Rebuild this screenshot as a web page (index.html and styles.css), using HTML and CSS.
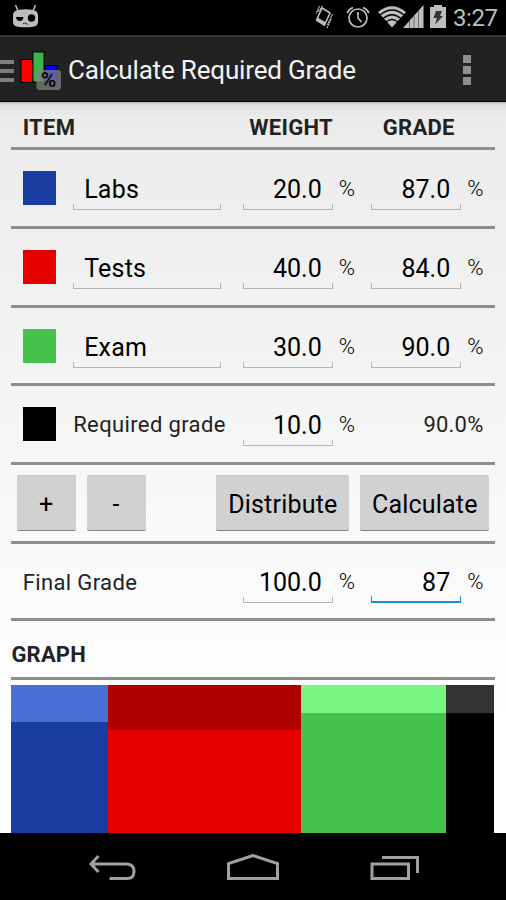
FILE: index.html
```html
<!DOCTYPE html>
<html lang="en">
<head>
    <meta charset="UTF-8">
    <meta name="viewport" content="width=device-width, initial-scale=1.0">
    <title>Calculate Required Grade</title>
    <link rel="stylesheet" href="styles.css">
</head>
<body>
    <div class="status-bar">
        <svg class="robot" width="26" height="24" viewBox="0 0 26 24">
            <path d="M2.500 0 L5 6 M22.500 0 L20 6" stroke="#bebebe" stroke-width="1.500"/>
            <path d="M5 5 Q13 3.500 20 5 Q25 6 25 10 V17 Q25 21 20 21.700 Q13 23 5 21.700 Q0 21 0 17 V10 Q0 6 5 5Z" fill="#bebebe"/>
            <path d="M3 12 H10.500 Q10 16 6.800 16 Q3.500 16 3 12Z" fill="#000"/>
            <circle cx="18.500" cy="13" r="3.700" fill="#000"/>
            <path d="M10 18.500 L12 18 L15 19.500" fill="none" stroke="#333"/>
        </svg>
        <div class="status-icons">
            <svg class="vibrate" width="20" height="24" viewBox="0 0 20 24" fill="none" stroke="#bebebe">
                <path d="M8 3 L16 8 L10.500 20 L2.500 15 Z" stroke-width="1.600" stroke-linejoin="round"/>
                <path d="M2 15.500 L10.500 21 L12 17.500 L3.500 12.500 Z" fill="#bebebe" stroke="none"/>
                <path d="M5.500 1 L2 9 M8.500 1 L4 7 M18.500 9 L13.500 20 M17 14 L13 23" stroke-width="1.200" stroke-dasharray="2 .6"/>
            </svg>
            <svg class="alarm" width="24" height="23" viewBox="0 0 24 23" fill="none" stroke="#bebebe">
                <circle cx="12" cy="12" r="9" stroke-width="1.700"/>
                <path d="M12 6 V12 L15.500 16" stroke-width="1.700"/>
                <path d="M1 7 Q3 3 7 1.500 M17 1.500 Q21 3 23 7" stroke-width="1.700"/>
            </svg>
            <svg class="wifi" width="28" height="22" viewBox="0 0 28 22">
                <path d="M0 6 Q14 -5.500 28 6 L14 21.500Z" fill="#bebebe"/>
                <path d="M2 9 Q14 -1 26 9 M5 12.500 Q14 5 23 12.500 M8 16 Q14 11 20 16" fill="none" stroke="#000" stroke-width="1.300"/>
            </svg>
            <svg class="signal" width="21" height="23" viewBox="0 0 21 23">
                <path d="M0 23 L20.500 0 V23Z" fill="#bebebe"/>
                <path d="M6.500 16 V23 M11 11 V23 M15.500 6 V23" stroke="#555" stroke-width=".8"/>
            </svg>
            <svg class="battery" width="16" height="23" viewBox="0 0 16 23">
                <path d="M4 0 H12 V2 H16 V23 H0 V2 H4Z" fill="#bebebe"/>
                <path d="M6 6 H12 L10 11 H13 L5 19.500 L7 13 H3.500Z" fill="#333"/>
            </svg>
            <span class="clock">3:27</span>
        </div>
    </div>

    <div class="action-bar">
        <div class="drawer"><span></span><span></span><span></span></div>
        <svg class="logo" width="42" height="40" viewBox="0 0 42 40">
            <rect x="1" y="8.500" width="12" height="23" fill="#f00" stroke="#000"/>
            <rect x="25" y="14.500" width="12" height="16" fill="#00f" stroke="#000"/>
            <rect x="13" y="1" width="11" height="30" fill="#39b54a" stroke="#000"/>
            <rect x="16.500" y="19" width="24.500" height="20" rx="3" fill="#808080" fill-opacity=".75"/>
            <text x="28.500" y="35.500" text-anchor="middle" class="logo-text">%</text>
        </svg>
        <h1>Calculate Required Grade</h1>
        <div class="overflow"><span></span><span></span><span></span></div>
    </div>

    <main class="content">
        <div class="row header">
            <span class="col-item">ITEM</span>
            <span class="col-weight">WEIGHT</span>
            <span class="col-grade">GRADE</span>
        </div>
        <div class="row">
            <span class="swatch blue"></span>
            <div class="field name">Labs</div>
            <div class="field number">20.0</div><span class="percent">%</span>
            <div class="field number">87.0</div><span class="percent">%</span>
        </div>
        <div class="row">
            <span class="swatch red"></span>
            <div class="field name">Tests</div>
            <div class="field number">40.0</div><span class="percent">%</span>
            <div class="field number">84.0</div><span class="percent">%</span>
        </div>
        <div class="row short">
            <span class="swatch green"></span>
            <div class="field name">Exam</div>
            <div class="field number">30.0</div><span class="percent">%</span>
            <div class="field number">90.0</div><span class="percent">%</span>
        </div>
        <div class="row">
            <span class="swatch black"></span>
            <span class="label required">Required grade</span>
            <div class="field number">10.0</div><span class="percent">%</span>
            <span class="result">90.0%</span>
        </div>
        <div class="row actions">
            <button class="small">+</button>
            <button class="small">-</button>
            <button class="distribute">Distribute</button>
            <button class="calculate">Calculate</button>
        </div>
        <div class="row final">
            <span class="label total">Final Grade</span>
            <div class="field number">100.0</div><span class="percent">%</span>
            <div class="field number focused">87</div><span class="percent">%</span>
        </div>
        <h2>GRAPH</h2>
        <div class="graph">
            <div class="bar blue" style="width: 20%"><div class="lost" style="height: 25%"></div></div>
            <div class="bar red" style="width: 40%"><div class="lost" style="height: 30.500%"></div></div>
            <div class="bar green" style="width: 30%"><div class="lost" style="height: 19%"></div></div>
            <div class="bar black" style="width: 10%"><div class="lost" style="height: 19%"></div></div>
        </div>
    </main>

    <div class="nav-bar">
        <svg width="48" height="28" viewBox="0 0 48 28">
            <path d="M10.500 2 L3 10 L10.500 18 M3 10 H39 Q46 10.500 46 17.500 Q46 24.500 39 24.500 H21.500" />
        </svg>
        <svg width="52" height="28" viewBox="0 0 52 28">
            <path d="M1.500 24.500 V9.500 L26 1.500 L50.500 9.500 V24.500Z"/>
        </svg>
        <svg width="50" height="28" viewBox="0 0 50 28">
            <path d="M2 10 H38.500 V24.500 H2Z M12 3.500 H47.500 V19"/>
        </svg>
    </div>
</body>
</html>
```
FILE: styles.css
```css
* {
    box-sizing: border-box;
}
body {
    margin: 0;
    height: 900px;
    display: flex;
    flex-direction: column;
    overflow: hidden;
    background-color: #000;
    color: #000;
    font-family: Roboto, sans-serif;
}
svg {
    display: block;
    flex: none;
}
.status-bar {
    height: 35px;
    display: flex;
    justify-content: space-between;
    align-items: flex-start;
    padding: 5px 8px 0 13px;
}
.status-icons {
    display: flex;
    align-items: flex-start;
}
.alarm {
    margin: 1px 0 0 12px;
}
.wifi {
    margin: 1px 0 0 8px;
}
.signal {
    margin-left: -3px;
}
.battery {
    margin-left: 6px;
}
.clock {
    width: 45px;
    margin-left: 7px;
    font-size: 24px;
    line-height: 27px;
    letter-spacing: -0.4px;
    color: #bebebe;
    white-space: nowrap;
}
.action-bar {
    height: 67px;
    flex: none;
    display: flex;
    align-items: center;
    background-color: #222;
    border-top: 2px solid #363636;
    border-bottom: 1px solid #000;
}
.drawer {
    width: 14px;
    display: flex;
    flex-direction: column;
    gap: 5px;
    padding-top: 3px;
}
.drawer span {
    height: 4px;
    background-color: #7c7d80;
}
.logo {
    margin: 4px 0 0 6px;
}
.logo-text {
    font-size: 21px;
    font-weight: 500;
}
h1 {
    flex: 1;
    margin: 2px 0 0 6px;
    font-size: 26px;
    font-weight: 400;
    letter-spacing: -0.17px;
    color: #f3f3f3;
    white-space: nowrap;
}
.overflow {
    display: flex;
    flex-direction: column;
    gap: 3px;
    margin: 2px 35px 0 0;
}
.overflow span {
    width: 8px;
    height: 8px;
    background-color: #8f8f8f;
}
.content {
    height: 731px;
    flex: none;
    padding: 0 11.500px 0 11.400px;
    background: linear-gradient(#bbb 0, #e2e2e2 3px, rgba(232,232,232,0) 15px), linear-gradient(#ebebeb, #fff 620px);
}
.row {
    height: 79px;
    display: flex;
    align-items: center;
    padding-left: 11.300px;
    border-bottom: 3px solid #8e8e8e;
}
.short {
    height: 78px;
}
.header {
    height: 48px;
    padding-top: 5px;
    font-size: 22px;
    font-weight: 700;
    letter-spacing: 0.3px;
    color: #222;
}
.col-item {
    width: 226.500px;
}
.col-weight {
    width: 133.500px;
}
.swatch {
    width: 33.500px;
    height: 34px;
}
.blue {
    background-color: #193da0;
}
.red {
    background-color: #e50000;
}
.green {
    background-color: #45c24c;
}
.black {
    background-color: #000;
}
.field {
    height: 42px;
    margin-top: 2px;
    font-size: 25px;
    line-height: 43px;
    padding: 0 11px;
    background: linear-gradient(#b5b5b5, #b5b5b5) left bottom / 1px 5px no-repeat,
        linear-gradient(#b5b5b5, #b5b5b5) right bottom / 1px 5px no-repeat;
    border-bottom: 1px solid #b5b5b5;
}
.name {
    width: 147.500px;
    margin: 2px 22px 0 17px;
    letter-spacing: 0.2px;
}
.number {
    width: 90px;
    text-align: right;
}
.percent {
    width: 15px;
    margin: 1px 17.500px 0 6px;
    font-size: 22px;
    font-weight: 300;
}
.percent:last-child {
    margin-right: 0;
}
.label {
    font-size: 22px;
    letter-spacing: 0.37px;
    padding-top: 1px;
    color: #222;
    white-space: nowrap;
}
.required {
    width: 169.500px;
    margin-left: 17px;
}
.result {
    flex: 1;
    padding: 1px 11px 0 0;
    font-size: 22px;
    letter-spacing: 0.2px;
    text-align: right;
    color: #222;
}
.actions {
    padding: 0 5.200px;
}
button {
    height: 56px;
    border: 0;
    border-bottom: 1px solid #858585;
    border-radius: 2px;
    padding: 3px 0 0;
    background-color: #d1d1d1;
    box-shadow: inset 0 1px #c5c5c5;
    font-family: Roboto, sans-serif;
    font-size: 25px;
    letter-spacing: 0.2px;
}
.small {
    width: 59px;
    margin-right: 11px;
}
.distribute {
    width: 133px;
    margin-left: auto;
}
.calculate {
    width: 129px;
    margin-left: 11px;
}
.final {
    height: 77px;
}
.total {
    width: 220px;
    padding-top: 2px;
}
.focused {
    background: linear-gradient(#1592d0, #1592d0) left bottom / 1px 5px no-repeat,
        linear-gradient(#1592d0, #1592d0) right bottom / 1px 5px no-repeat;
    border-bottom: 2px solid #1592d0;
}
h2 {
    height: 59px;
    margin: 0 0 5px;
    padding-top: 9px;
    border-bottom: 3px solid #8e8e8e;
    font-size: 22px;
    line-height: 50px;
    letter-spacing: 0.2px;
    color: #222;
}
.graph {
    height: 148px;
    display: flex;
}
.blue .lost {
    background-color: #4970d5;
}
.red .lost {
    background-color: #b00000;
}
.green .lost {
    background-color: #78f580;
}
.black .lost {
    background-color: #333;
}
.nav-bar {
    flex: 1;
    display: flex;
    justify-content: space-between;
    padding: 21px 86px 0 88px;
    fill: none;
    stroke: #a0a0a0;
    stroke-width: 3;
}
```
